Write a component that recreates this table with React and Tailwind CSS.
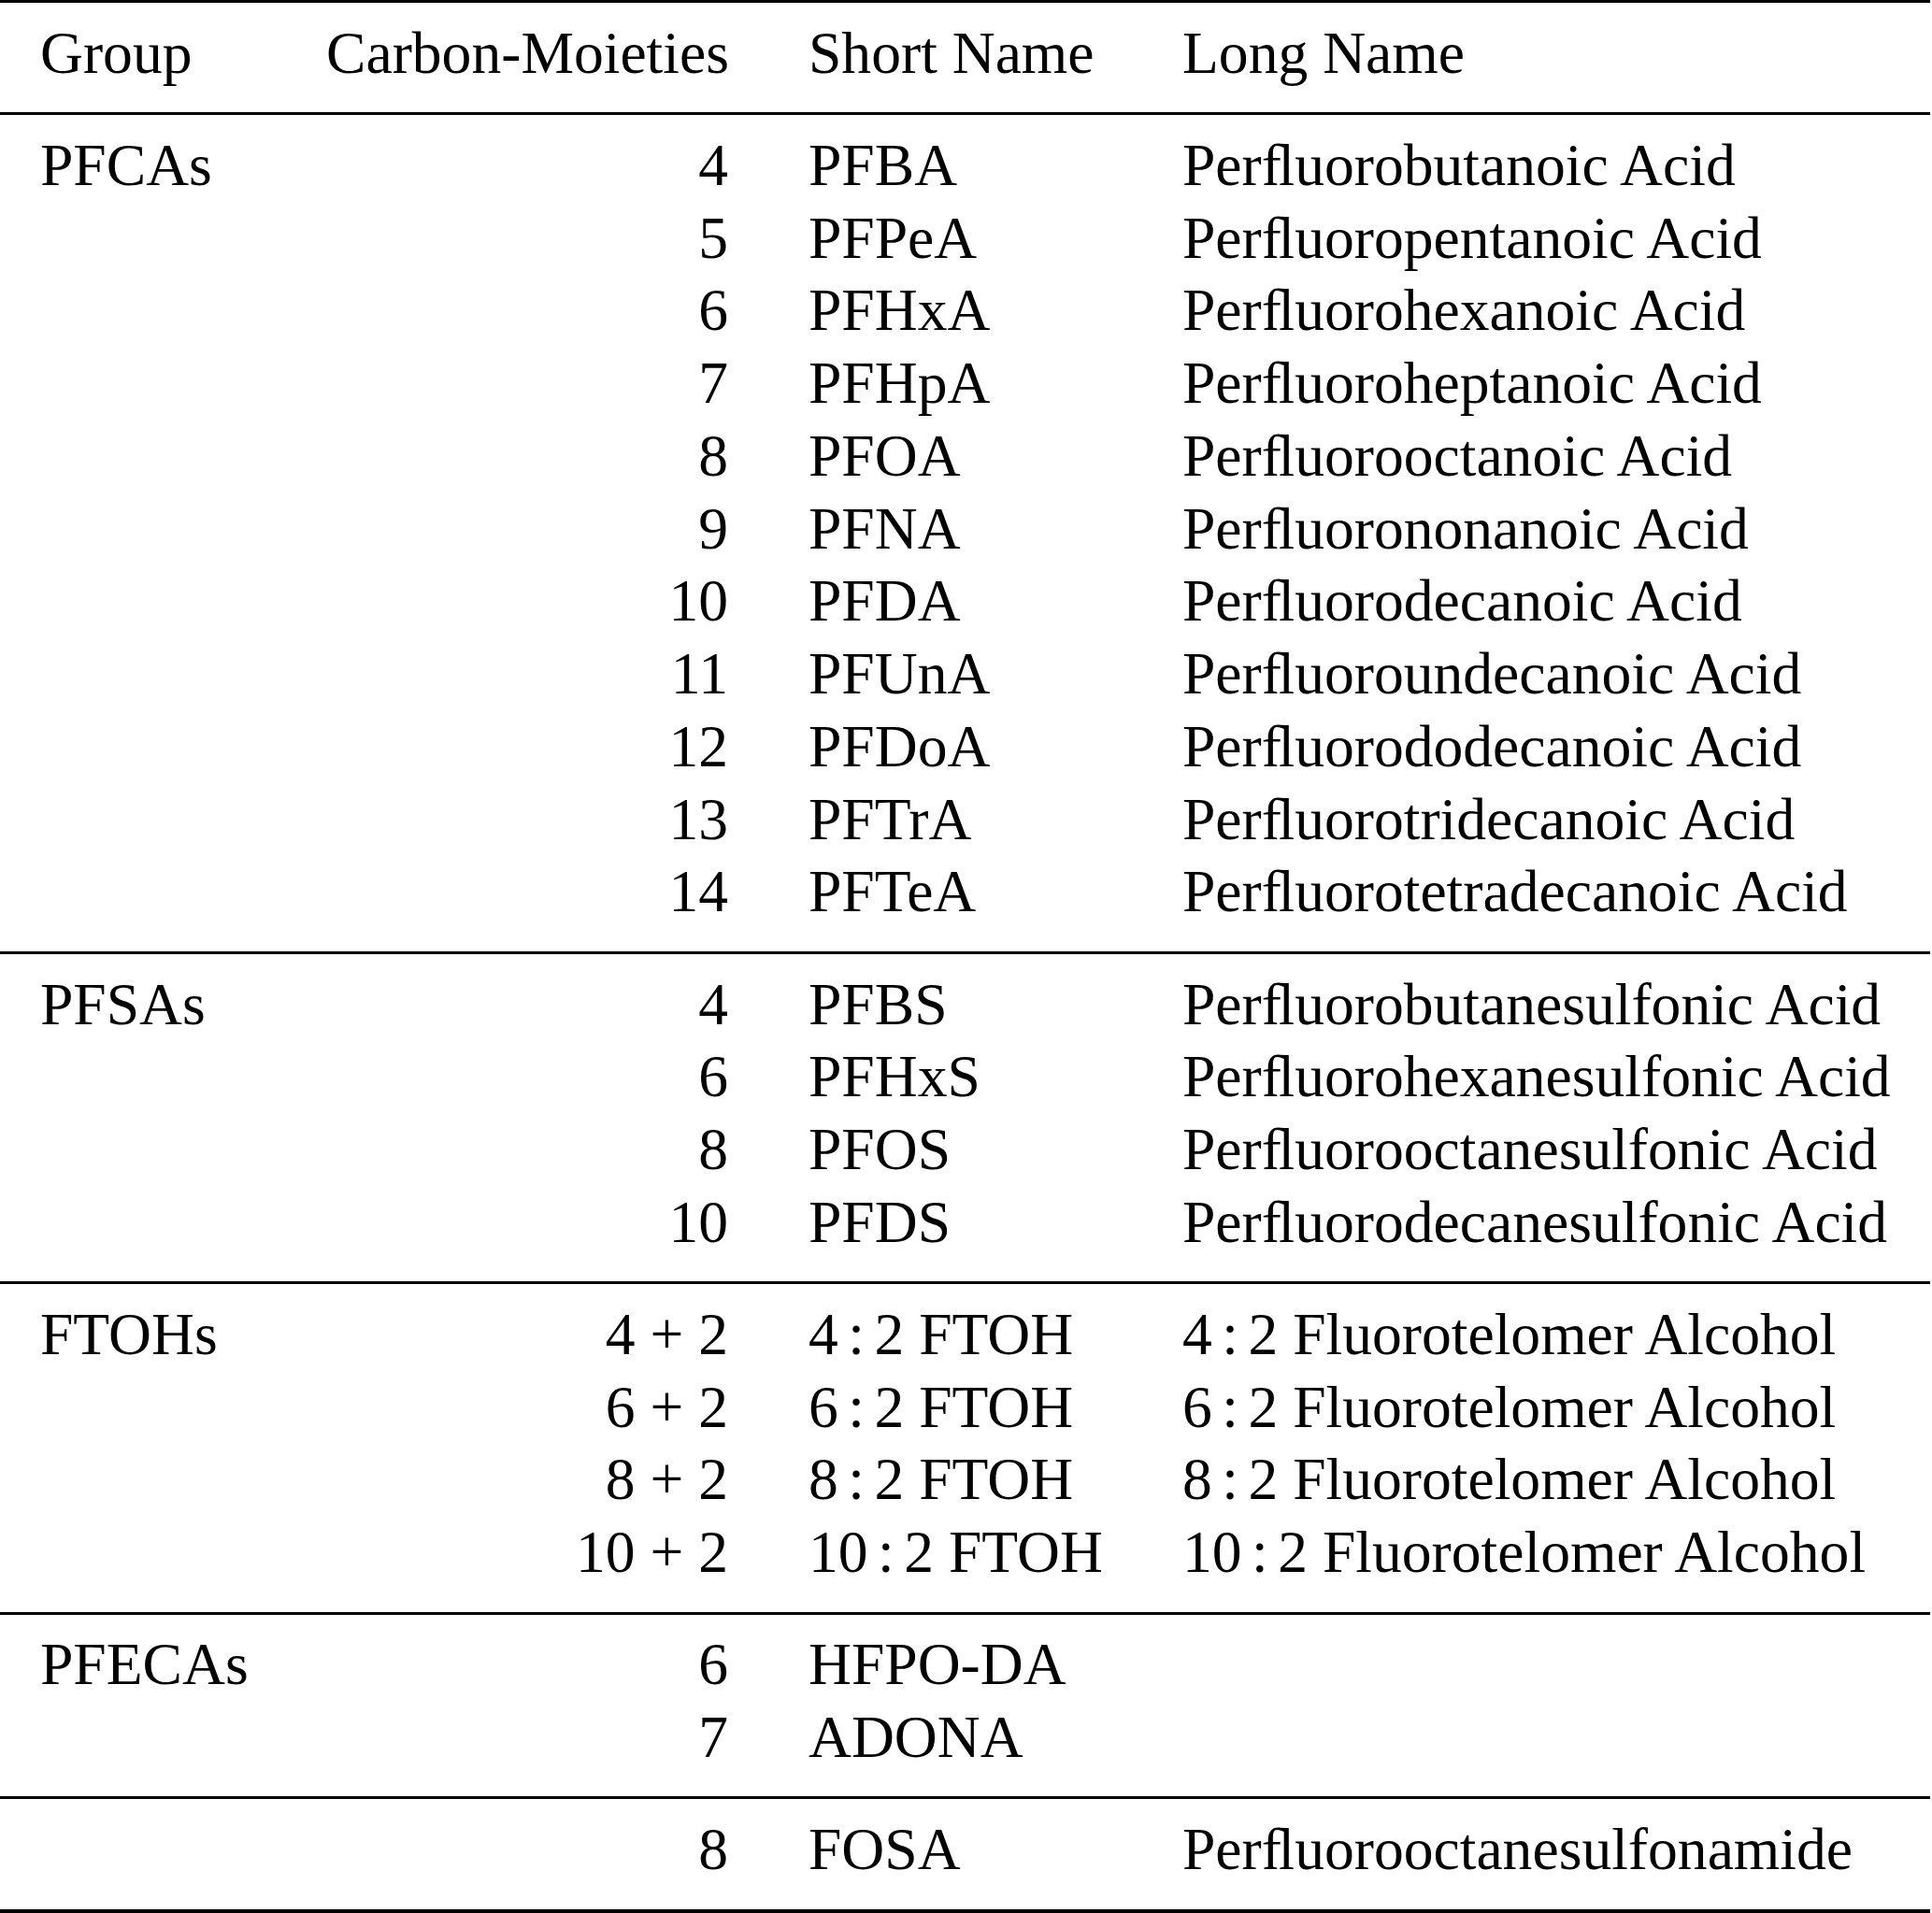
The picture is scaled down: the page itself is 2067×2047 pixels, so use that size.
const groups = [
  {
    name: "PFCAs",
    rows: [
      ["4", "PFBA", "Perﬂuorobutanoic Acid"],
      ["5", "PFPeA", "Perﬂuoropentanoic Acid"],
      ["6", "PFHxA", "Perﬂuorohexanoic Acid"],
      ["7", "PFHpA", "Perﬂuoroheptanoic Acid"],
      ["8", "PFOA", "Perﬂuorooctanoic Acid"],
      ["9", "PFNA", "Perﬂuorononanoic Acid"],
      ["10", "PFDA", "Perﬂuorodecanoic Acid"],
      ["11", "PFUnA", "Perﬂuoroundecanoic Acid"],
      ["12", "PFDoA", "Perﬂuorododecanoic Acid"],
      ["13", "PFTrA", "Perﬂuorotridecanoic Acid"],
      ["14", "PFTeA", "Perﬂuorotetradecanoic Acid"]
    ]
  },
  {
    name: "PFSAs",
    rows: [
      ["4", "PFBS", "Perﬂuorobutanesulfonic Acid"],
      ["6", "PFHxS", "Perﬂuorohexanesulfonic Acid"],
      ["8", "PFOS", "Perﬂuorooctanesulfonic Acid"],
      ["10", "PFDS", "Perﬂuorodecanesulfonic Acid"]
    ]
  },
  {
    name: "FTOHs",
    rows: [
      ["4 + 2", ["4", "2 FTOH"], ["4", "2 Fluorotelomer Alcohol"]],
      ["6 + 2", ["6", "2 FTOH"], ["6", "2 Fluorotelomer Alcohol"]],
      ["8 + 2", ["8", "2 FTOH"], ["8", "2 Fluorotelomer Alcohol"]],
      ["10 + 2", ["10", "2 FTOH"], ["10", "2 Fluorotelomer Alcohol"]]
    ]
  },
  {
    name: "PFECAs",
    rows: [
      ["6", "HFPO-DA", ""],
      ["7", "ADONA", ""]
    ]
  },
  {
    name: "",
    rows: [["8", "FOSA", "Perﬂuorooctanesulfonamide"]]
  }
];

// "4 : 2" ratio — colon set tighter than a normal word space, like TeX's math colon
function Cell({ value }) {
  if (Array.isArray(value)) {
    return (
      <>
        {value[0]}
        <span className="mx-[10.5px]">:</span>
        {value[1]}
      </>
    );
  }
  return value;
}

function Row({ cells }) {
  return (
    <div className="grid h-[77.75px] grid-cols-[220px_430px_314px_1fr] gap-x-[86px] whitespace-nowrap pl-[43px] leading-[77.75px]">
      <div>{cells[0]}</div>
      <div className="text-right">{cells[1]}</div>
      <div>
        <Cell value={cells[2]} />
      </div>
      <div>
        <Cell value={cells[3]} />
      </div>
    </div>
  );
}

function Rule() {
  return <div className="mb-[14.8px] mt-[24.6px] h-[3px] bg-black" />;
}

export default function App() {
  return (
    <div
      className="w-[2067px] bg-white text-[63.6px] text-black"
      style={{ fontFamily: '"Liberation Serif", "Times New Roman", serif' }}
    >
      <div className="w-[2065px]">
        <div className="mb-[14.8px] h-[3px] bg-black" />
        <Row cells={["Group", "Carbon-Moieties", "Short Name", "Long Name"]} />
        {groups.map((g) => (
          <div key={g.name + g.rows[0][1]}>
            <Rule />
            {g.rows.map((r, i) => (
              <Row key={i} cells={[i === 0 ? g.name : "", ...r]} />
            ))}
          </div>
        ))}
        <div className="mt-[24.6px] h-[4.35px] bg-black" />
      </div>
    </div>
  );
}
